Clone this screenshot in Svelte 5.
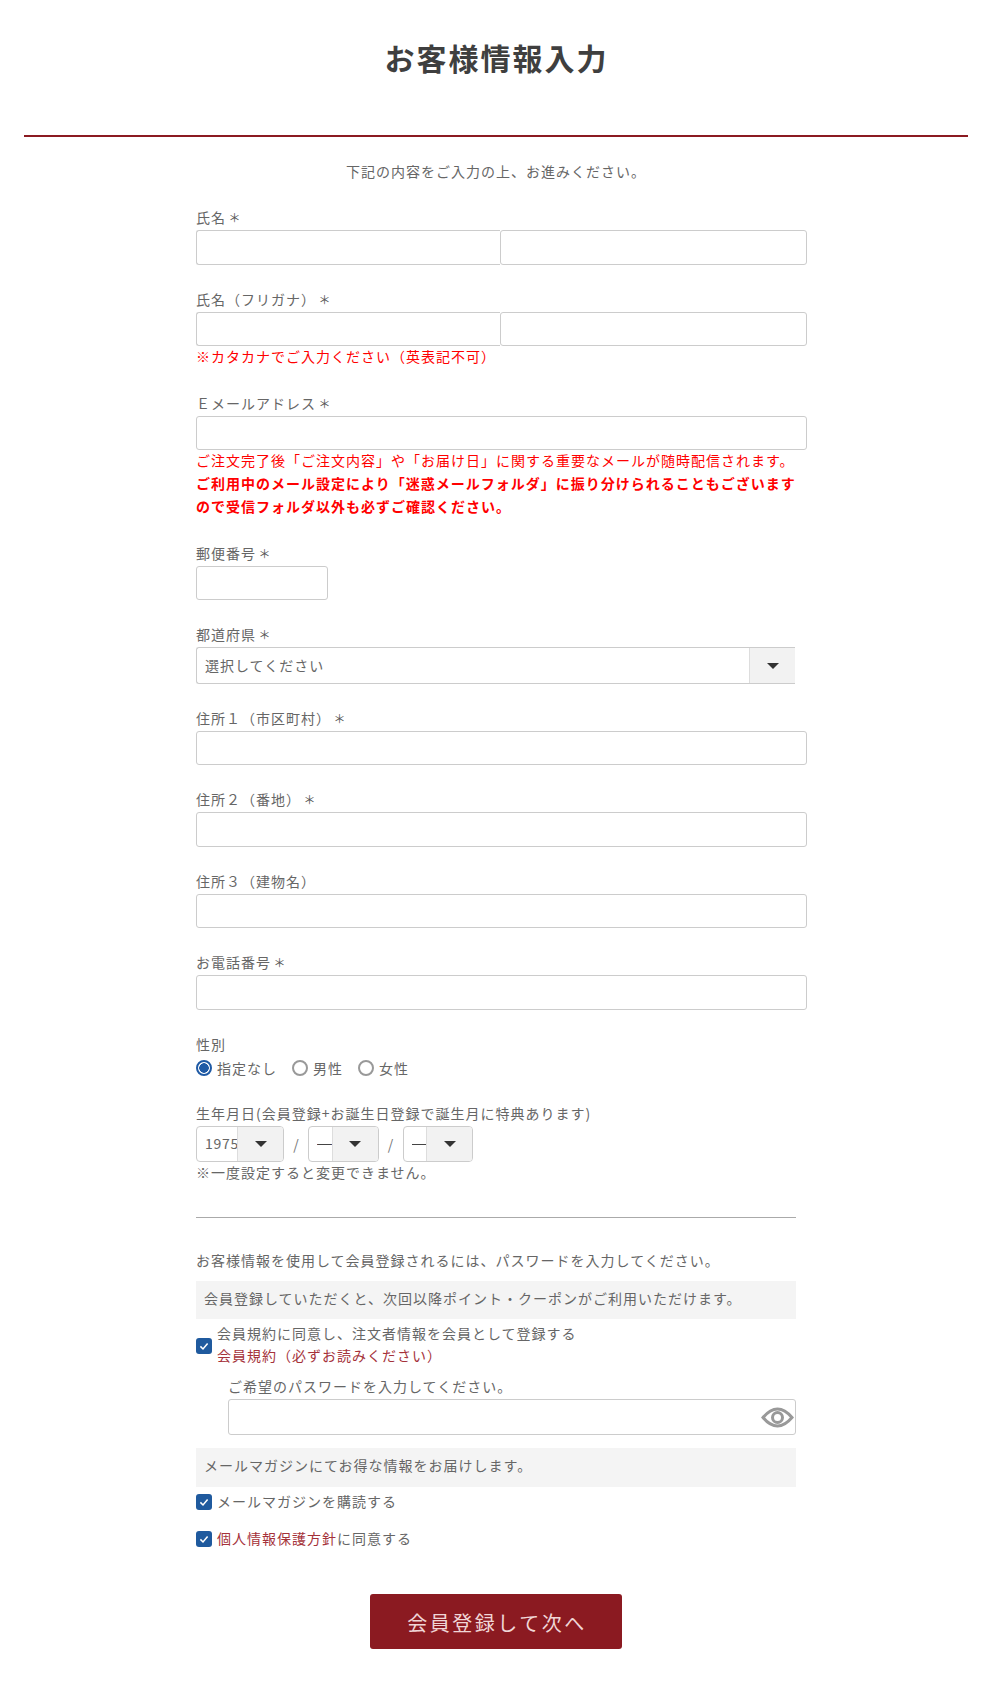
<script>
  const radios = [
    { label: '指定なし', checked: true },
    { label: '男性', checked: false },
    { label: '女性', checked: false }
  ];
  const dates = [
    { value: '1975', cls: 'year' },
    { value: '—', cls: 'part' },
    { value: '—', cls: 'part' }
  ];
</script>

<main class="page">
  <h1 class="title">お客様情報入力</h1>
  <div class="rule"></div>
  <p class="lead">下記の内容をご入力の上、お進みください。</p>

  <form class="form" onsubmit={(e) => e.preventDefault()}>
    <div class="field">
      <label class="lbl" for="n1">氏名<span class="req">＊</span></label>
      <div class="pair"><input id="n1" class="inp" /><input class="inp" aria-label="名" /></div>
    </div>

    <div class="field">
      <label class="lbl" for="k1">氏名（フリガナ）<span class="req">＊</span></label>
      <div class="pair"><input id="k1" class="inp" /><input class="inp" aria-label="メイ" /></div>
      <p class="red">※カタカナでご入力ください（英表記不可）</p>
    </div>

    <div class="field">
      <label class="lbl" for="em">Ｅメールアドレス<span class="req">＊</span></label>
      <input id="em" class="inp wide" />
      <p class="red">ご注文完了後「ご注文内容」や「お届け日」に関する重要なメールが随時配信されます。<br /><b>ご利用中のメール設定により「迷惑メールフォルダ」に振り分けられることもございますので受信フォルダ以外も必ずご確認ください。</b></p>
    </div>

    <div class="field">
      <label class="lbl" for="zip">郵便番号<span class="req">＊</span></label>
      <input id="zip" class="inp zip" />
    </div>

    <div class="field">
      <label class="lbl" for="pref">都道府県<span class="req">＊</span></label>
      <div class="sel full">
        <select id="pref"><option>選択してください</option></select>
        <span class="arrow"><i></i></span>
      </div>
    </div>

    <div class="field">
      <label class="lbl" for="a1">住所１（市区町村）<span class="req">＊</span></label>
      <input id="a1" class="inp wide" />
    </div>
    <div class="field">
      <label class="lbl" for="a2">住所２（番地）<span class="req">＊</span></label>
      <input id="a2" class="inp wide" />
    </div>
    <div class="field">
      <label class="lbl" for="a3">住所３（建物名）</label>
      <input id="a3" class="inp wide" />
    </div>
    <div class="field">
      <label class="lbl" for="tel">お電話番号<span class="req">＊</span></label>
      <input id="tel" class="inp wide" />
    </div>

    <div class="field">
      <div class="lbl">性別</div>
      <div class="radios">
        {#each radios as r}
          <label class="radio"><span class="dot" class:on={r.checked}></span>{r.label}</label>
        {/each}
      </div>
    </div>

    <div class="birth">
      <div class="lbl">生年月日(会員登録+お誕生日登録で誕生月に特典あります)</div>
      <div class="dates">
        {#each dates as d, i}
          {#if i > 0}<span class="slash">/</span>{/if}
          <div class="sel round {d.cls}">
            <select aria-label="生年月日"><option>{d.value}</option></select>
            <span class="arrow"><i></i></span>
          </div>
        {/each}
      </div>
      <p class="note">※一度設定すると変更できません。</p>
    </div>

    <hr class="sep" />

    <p class="intro">お客様情報を使用して会員登録されるには、パスワードを入力してください。</p>
    <div class="band">会員登録していただくと、次回以降ポイント・クーポンがご利用いただけます。</div>

    <div class="check first">
      <span class="box"><svg viewBox="0 0 16 16"><path d="M4.4 8.4l2.6 2.6 4.6-5.6" /></svg></span>
      <div>
        <div>会員規約に同意し、注文者情報を会員として登録する</div>
        <div class="link">会員規約（必ずお読みください）</div>
      </div>
    </div>

    <div class="pw">
      <label class="lbl" for="pw">ご希望のパスワードを入力してください。</label>
      <div class="pw-box">
        <input id="pw" type="password" />
        <svg class="eye" viewBox="0 0 33 21" aria-hidden="true">
          <path d="M2 10.5Q16.5-6.5 31 10.5 16.5 27.5 2 10.5Z" />
          <circle cx="16.5" cy="10.5" r="5" />
        </svg>
      </div>
    </div>

    <div class="band second">メールマガジンにてお得な情報をお届けします。</div>

    <div class="check mag">
      <span class="box"><svg viewBox="0 0 16 16"><path d="M4.4 8.4l2.6 2.6 4.6-5.6" /></svg></span>
      <div>メールマガジンを購読する</div>
    </div>
    <div class="check priv">
      <span class="box"><svg viewBox="0 0 16 16"><path d="M4.4 8.4l2.6 2.6 4.6-5.6" /></svg></span>
      <div><span class="link">個人情報保護方針</span>に同意する</div>
    </div>

    <button class="submit" type="submit">会員登録して次へ</button>
  </form>
</main>

<style>
  :global(body) {
    margin: 0;
    background: #fff;
  }
  .page {
    height: 1682px;
    padding: 0 21px 0 24px;
    box-sizing: border-box;
    font-family: "Noto Sans CJK JP", "Noto Sans", sans-serif;
    font-size: 14px;
    letter-spacing: 1px;
    color: #666;
    overflow: hidden;
  }
  .title {
    margin: 0;
    padding-top: 36px;
    height: 98px;
    box-sizing: border-box;
    text-align: center;
    text-indent: 1px;
    font-size: 30px;
    line-height: 42px;
    font-weight: 700;
    letter-spacing: 2px;
    color: #3f3f3f;
  }
  .rule {
    height: 2px;
    margin-top: 37px;
    background: #8b1a21;
  }
  .lead {
    margin: 23px 0 0;
    text-align: center;
    line-height: 22px;
  }
  .form {
    width: 600px;
    margin: 24.1px auto 0;
  }
  .field {
    margin-bottom: 23px;
  }
  .lbl {
    display: block;
    line-height: 23px;
    height: 24px;
  }
  .req {
    font-size: 12px;
    padding: 0 1px 0 2.5px;
    color: #555;
  }
  .inp {
    display: block;
    box-sizing: border-box;
    height: 34.5px;
    padding: 0 8px;
    border: 1px solid #ccc;
    border-bottom-width: 1.5px;
    border-radius: 3px;
    background: #fff;
    font: inherit;
  }
  .wide {
    width: 611px;
  }
  .zip {
    width: 131.5px;
  }
  .pair {
    display: flex;
    width: 611px;
  }
  .pair .inp {
    min-width: 0;
  }
  .pair .inp:first-child {
    flex: 0 0 304px;
    border-right: 0;
    border-radius: 3px 0 0 3px;
  }
  .pair .inp:last-child {
    flex: 1;
    border-radius: 3px;
  }
  .red {
    margin: -1px 0 0;
    padding-bottom: 1px;
    color: #f00;
    line-height: 22.8px;
  }
  .sel {
    display: flex;
    box-sizing: border-box;
    height: 36.5px;
    border: 1px solid #ccc;
    border-bottom-width: 1.5px;
    background: #fff;
    overflow: hidden;
  }
  .sel select {
    flex: 1;
    min-width: 0;
    appearance: none;
    border: 0;
    background: transparent;
    padding: 0 0 2px 8px;
    font: inherit;
    letter-spacing: inherit;
    color: #666;
    outline: none;
  }
  .full {
    width: 599px;
    border-right: 0;
    border-radius: 3px 0 0 3px;
  }
  .arrow {
    flex: none;
    width: 45px;
    display: flex;
    align-items: center;
    justify-content: center;
    border-left: 1px solid #ddd;
    background: #f2f2f2;
  }
  .arrow i {
    width: 0;
    height: 0;
    border-style: solid;
    border-width: 6px 6px 0;
    border-color: #333 transparent transparent;
  }
  .radios {
    display: flex;
    height: 22px;
    gap: 15px;
  }
  .radio {
    display: flex;
    align-items: center;
    gap: 5px;
    line-height: 22px;
  }
  .dot {
    box-sizing: border-box;
    width: 16px;
    height: 16px;
    border: 2px solid #999;
    border-radius: 50%;
    background: #fff;
  }
  .dot.on {
    border-color: #1f5aa5;
    background: radial-gradient(circle, #1f5aa5 0 4.5px, #fff 5px);
  }
  .dates {
    display: flex;
    align-items: center;
  }
  .round {
    border-radius: 4px;
    border-bottom-width: 1px;
    height: 36px;
  }
  .year {
    width: 88px;
  }
  .year select {
    letter-spacing: 0.7px;
  }
  .part {
    width: 70.5px;
  }
  .part select {
    font-family: "Liberation Sans", sans-serif;
    font-size: 15px;
    letter-spacing: 0;
    color: #444;
  }
  .slash {
    width: 24px;
    text-align: center;
    color: #777;
    letter-spacing: 0;
  }
  .note {
    margin: -1px 0 0;
    padding-bottom: 1px;
    line-height: 22.8px;
  }
  .sep {
    margin: 32px 0 0;
    height: 0;
    border: 0;
    border-top: 1.5px solid #aaa;
  }
  .intro {
    margin: 31px 0 0;
    line-height: 22px;
  }
  .band {
    margin-top: 10px;
    height: 38px;
    padding: 0 8px;
    line-height: 35px;
    background: #f4f4f4;
  }
  .check {
    display: flex;
    align-items: flex-start;
    gap: 5px;
    line-height: 18px;
  }
  .check .box {
    margin-top: 2px;
  }
  .first {
    margin-top: 3.5px;
    align-items: center;
    line-height: 22px;
  }
  .first .box {
    margin-top: 4px;
  }
  .box {
    flex: none;
    width: 16px;
    height: 16px;
    border-radius: 3px;
    background: #1f5a9e;
  }
  .box svg {
    display: block;
    width: 16px;
    height: 16px;
    fill: none;
    stroke: #fff;
    stroke-width: 1.5;
  }
  .link {
    color: #a5323a;
  }
  .pw {
    margin: 8.5px 0 0 32px;
  }
  .pw-box {
    position: relative;
    height: 36.5px;
    box-sizing: border-box;
    border: 1px solid #ccc;
    border-bottom-width: 1.5px;
    border-radius: 3px;
  }
  .pw-box input {
    width: 100%;
    height: 100%;
    box-sizing: border-box;
    border: 0;
    background: transparent;
    outline: none;
  }
  .eye {
    position: absolute;
    right: 1px;
    top: 7px;
    width: 33px;
    height: 21px;
    fill: none;
    stroke: #999;
    stroke-width: 3;
  }
  .second {
    margin-top: 12.5px;
    height: 39px;
    line-height: 35px;
  }
  .mag {
    margin-top: 5px;
  }
  .priv {
    margin-top: 19px;
  }
  .submit {
    display: block;
    width: 252px;
    height: 55px;
    margin: 47px 0 0 174px;
    padding: 2px 0 0 2px;
    border: 0;
    border-radius: 3px;
    background: #8b1a21;
    color: #f0d6d7;
    font: inherit;
    font-size: 20px;
    letter-spacing: 2.5px;
  }
</style>
